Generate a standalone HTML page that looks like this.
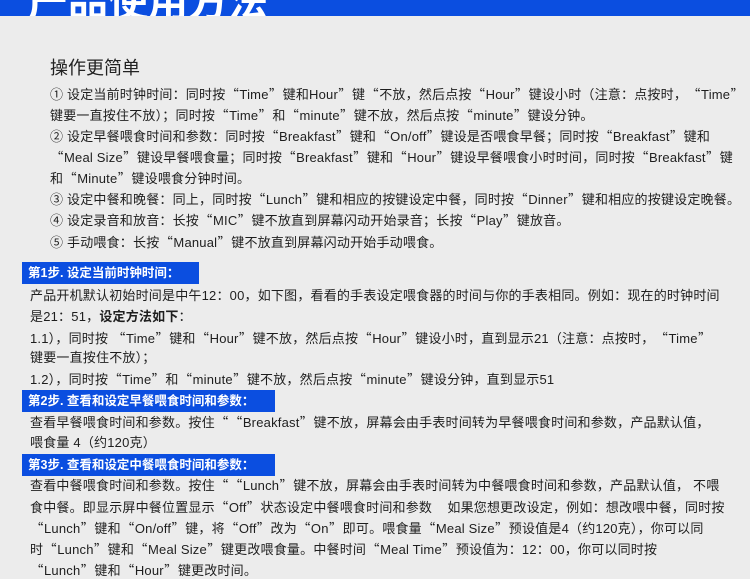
<!DOCTYPE html>
<html><head><meta charset="utf-8"><style>
body{margin:0;width:750px;height:577px;background:#ececec;overflow:hidden;position:relative;font-family:"Liberation Sans","Noto Sans CJK SC",sans-serif;color:#1e1e1e}
.hd{position:absolute;left:0;top:0;width:750px;height:16px;background:#0b4ee0;overflow:hidden}
.hd span{position:absolute;left:28px;top:-30px;font-size:40px;font-weight:bold;color:#fff;white-space:nowrap}
.l{position:absolute;white-space:nowrap;font-size:13px;line-height:16px;letter-spacing:0.2px}
i{font-style:normal;font-family:"Noto Sans CJK SC",sans-serif;display:inline-block;width:14px;text-align:center}
.t{position:absolute;left:50px;top:57px;font-size:18px;line-height:22px;color:#222}
.lb{position:absolute;left:22px;height:22px;background:#0b4ee0;color:#fff;font-weight:bold;font-size:12.5px;line-height:22px;padding-left:6px;white-space:nowrap}
</style></head><body>
<div class="hd"><span>产品使用方法</span></div>
<div class="t">操作更简单</div>
<div class="l" style="left:50px;top:86px">① 设定当前时钟时间：同时按<i>“</i>Time<i>”</i>键和Hour<i>”</i>键<i>“</i>不放，然后点按<i>“</i>Hour<i>”</i>键设小时（注意：点按时，<i>“</i>Time<i>”</i></div>
<div class="l" style="left:50px;top:107px">键要一直按住不放）；同时按<i>“</i>Time<i>”</i>和<i>“</i>minute<i>”</i>键不放，然后点按<i>“</i>minute<i>”</i>键设分钟。</div>
<div class="l" style="left:50px;top:128px">② 设定早餐喂食时间和参数：同时按<i>“</i>Breakfast<i>”</i>键和<i>“</i>On/off<i>”</i>键设是否喂食早餐；同时按<i>“</i>Breakfast<i>”</i>键和</div>
<div class="l" style="left:50px;top:149px"><i>“</i>Meal Size<i>”</i>键设早餐喂食量；同时按<i>“</i>Breakfast<i>”</i>键和<i>“</i>Hour<i>”</i>键设早餐喂食小时时间，同时按<i>“</i>Breakfast<i>”</i>键</div>
<div class="l" style="left:50px;top:170px">和<i>“</i>Minute<i>”</i>键设喂食分钟时间。</div>
<div class="l" style="left:50px;top:191px">③ 设定中餐和晚餐：同上，同时按<i>“</i>Lunch<i>”</i>键和相应的按键设定中餐，同时按<i>“</i>Dinner<i>”</i>键和相应的按键设定晚餐。</div>
<div class="l" style="left:50px;top:212px">④ 设定录音和放音：长按<i>“</i>MIC<i>”</i>键不放直到屏幕闪动开始录音；长按<i>“</i>Play<i>”</i>键放音。</div>
<div class="l" style="left:50px;top:234px">⑤ 手动喂食：长按<i>“</i>Manual<i>”</i>键不放直到屏幕闪动开始手动喂食。</div>
<div class="lb" style="top:262px;width:171px">第1步. 设定当前时钟时间：</div>
<div class="l" style="left:30px;top:288px">产品开机默认初始时间是中午12：00，如下图，看看的手表设定喂食器的时间与你的手表相同。例如：现在的时钟时间</div>
<div class="l" style="left:30px;top:309px">是21：51，<b>设定方法如下</b>：</div>
<div class="l" style="left:30px;top:330px">1.1），同时按 <i>“</i>Time<i>”</i>键和<i>“</i>Hour<i>”</i>键不放，然后点按<i>“</i>Hour<i>”</i>键设小时，直到显示21（注意：点按时，<i>“</i>Time<i>”</i></div>
<div class="l" style="left:30px;top:350px">键要一直按住不放）；</div>
<div class="l" style="left:30px;top:371px">1.2），同时按<i>“</i>Time<i>”</i>和<i>“</i>minute<i>”</i>键不放，然后点按<i>“</i>minute<i>”</i>键设分钟，直到显示51</div>
<div class="lb" style="top:390px;width:247px">第2步. 查看和设定早餐喂食时间和参数：</div>
<div class="l" style="left:30px;top:414px">查看早餐喂食时间和参数。按住<i>“</i><i>“</i>Breakfast<i>”</i>键不放，屏幕会由手表时间转为早餐喂食时间和参数，产品默认值，</div>
<div class="l" style="left:30px;top:435px">喂食量 4（约120克）</div>
<div class="lb" style="top:454px;width:247px">第3步. 查看和设定中餐喂食时间和参数：</div>
<div class="l" style="left:30px;top:477px">查看中餐喂食时间和参数。按住<i>“</i><i>“</i>Lunch<i>”</i>键不放，屏幕会由手表时间转为中餐喂食时间和参数，产品默认值，&nbsp;不喂</div>
<div class="l" style="left:30px;top:499px">食中餐。即显示屏中餐位置显示<i>“</i>Off<i>”</i>状态设定中餐喂食时间和参数&nbsp;&nbsp;&nbsp;&nbsp;如果您想更改设定，例如：想改喂中餐，同时按</div>
<div class="l" style="left:30px;top:520px"><i>“</i>Lunch<i>”</i>键和<i>“</i>On/off<i>”</i>键，将<i>“</i>Off<i>”</i>改为<i>“</i>On<i>”</i>即可。喂食量<i>“</i>Meal Size<i>”</i>预设值是4（约120克），你可以同</div>
<div class="l" style="left:30px;top:541px">时<i>“</i>Lunch<i>”</i>键和<i>“</i>Meal Size<i>”</i>键更改喂食量。中餐时间<i>“</i>Meal Time<i>”</i>预设值为：12：00，你可以同时按</div>
<div class="l" style="left:30px;top:562px"><i>“</i>Lunch<i>”</i>键和<i>“</i>Hour<i>”</i>键更改时间。</div>
</body></html>
